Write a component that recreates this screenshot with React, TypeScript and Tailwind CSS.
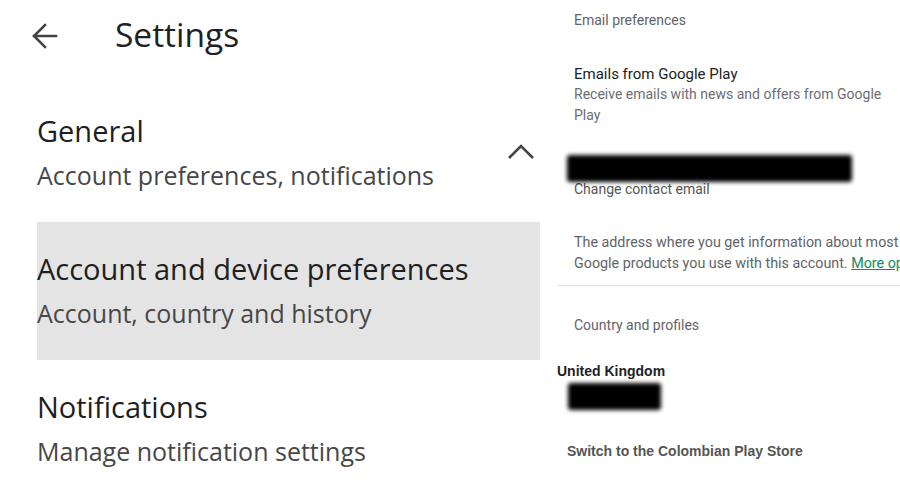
import React from 'react';

const rows = [
  { title: 'General', sub: 'Account preferences, notifications', open: true },
  { title: 'Account and device preferences', sub: 'Account, country and history', active: true },
  { title: 'Notifications', sub: 'Manage notification settings' },
];

function Redacted({ className }: { className: string }) {
  return <div className={`bg-black blur-[2px] rounded-[3px] ${className}`} />;
}

export default function App() {
  return (
    <div className="flex w-[900px] h-[500px] overflow-hidden bg-white font-['Roboto',sans-serif]">
      {/* left: settings list */}
      <div className="w-[540px] shrink-0 font-['Open_Sans',sans-serif]">
        <div className="flex items-center h-[40px] mt-[14px]">
          <svg width="88" height="40" viewBox="0 0 88 40" className="shrink-0 mt-[4px]">
            <path d="M56 20H34M45 9 34 20l11 11" fill="none" stroke="#444" strokeWidth="2.6" strokeLinecap="square" />
          </svg>
          <h1 className="ml-[27px] text-[33.5px] leading-[40px] text-[#202124]">Settings</h1>
        </div>

        <div className="ml-[37px] mt-[30px]">
          {rows.map((r) => (
            <div
              key={r.title}
              className={`flex items-center justify-between h-[138px] ${r.active ? 'bg-[#e4e4e4]' : ''}`}
            >
              <div className="flex flex-col pb-[3px]">
                <span className="text-[29px] leading-[36px] text-[#1f1f1f]">{r.title}</span>
                <span className="mt-[10px] text-[25px] leading-[32px] text-[#474747]">{r.sub}</span>
              </div>
              {r.open && (
                <svg width="32" height="18" viewBox="0 0 32 18" className="mr-[3px] -mt-[3px]">
                  <path d="M4 15 16 3l12 12" fill="none" stroke="#444" strokeWidth="2.6" />
                </svg>
              )}
            </div>
          ))}
        </div>
      </div>

      {/* right: account & device preferences detail */}
      <div className="flex-1 overflow-hidden whitespace-nowrap">
        <div className="pl-[34px] pt-[10px] text-[14px] leading-[20px] text-[#5f6368]">Email preferences</div>

        <div className="pl-[34px] mt-[34px] text-[15px] leading-[20px] text-[#202124]">Emails from Google Play</div>
        <div className="pl-[34px] text-[14px] leading-[21px] text-[#6b6e72]">
          Receive emails with news and offers from Google
          <br />
          Play
        </div>

        <Redacted className="ml-[27px] mt-[29px] w-[285px] h-[27px]" />
        <div className="pl-[34px] -mt-[2px] text-[14px] leading-[18px] text-[#555]">Change contact email</div>

        <div className="pl-[34px] mt-[34px] text-[14.3px] leading-[21px] text-[#5f6368]">
          The address where you get information about most
          <br />
          Google products you use with this account.{' '}
          <span className="text-[#138a5e] underline">More options</span>
        </div>

        <div className="ml-[17px] mt-[11px] h-px bg-[#e2e2e2]" />

        <div className="pl-[34px] mt-[29px] text-[14px] leading-[20px] text-[#5f6368]">Country and profiles</div>

        <div className="pl-[17px] mt-[28px] font-['Liberation_Sans',Arial,sans-serif] font-bold text-[14px] leading-[16px] text-[#222]">
          United Kingdom
        </div>
        <Redacted className="ml-[28px] mt-[4px] w-[93px] h-[27px]" />

        <div className="pl-[27px] mt-[33px] font-['Liberation_Sans',Arial,sans-serif] font-bold text-[14px] leading-[16px] text-[#555]">
          Switch to the Colombian Play Store
        </div>
      </div>
    </div>
  );
}
